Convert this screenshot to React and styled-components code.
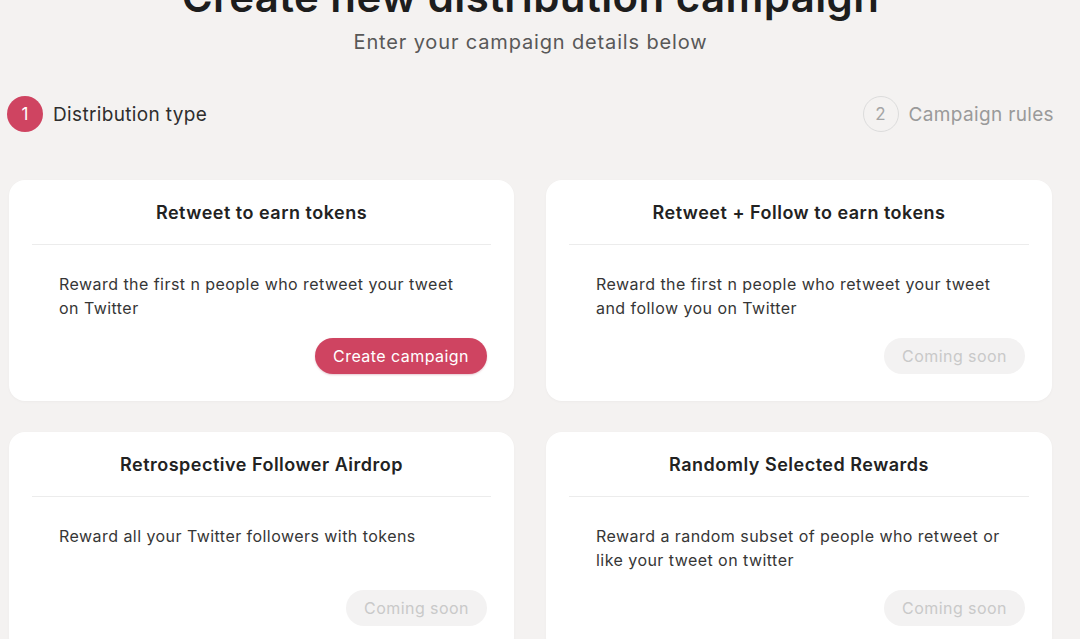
import React from "react";
import styled, { createGlobalStyle } from "styled-components";

const Global = createGlobalStyle`
  html, body { margin: 0; padding: 0; background: #f4f2f1; }
  body { font-family: Inter, "Noto Sans", sans-serif; color: #2a2a2a; overflow: hidden; }
  * { box-sizing: border-box; }
`;

const Page = styled.div`
  width: 1080px;
  height: 639px;
  overflow: hidden;
  background: #f4f2f1;
`;

const Container = styled.div`
  width: 1047px;
  margin-left: 7px;
  display: flex;
  flex-direction: column;
`;

const Title = styled.h1`
  margin: -27px 0 0;
  font-size: 42px;
  line-height: 48px;
  font-weight: 600;
  text-align: center;
  color: #1d1d1d;
  letter-spacing: 0.4px;
`;

const Subtitle = styled.p`
  margin: 9px 0 0;
  font-size: 20px;
  line-height: 24px;
  text-align: center;
  color: #585858;
  letter-spacing: 0.85px;
`;

const Steps = styled.div`
  display: flex;
  justify-content: space-between;
  align-items: center;
  margin-top: 42px;
`;

const Step = styled.div`
  display: flex;
  align-items: center;
  gap: 10px;
  font-size: 19px;
  letter-spacing: 0.35px;
  color: ${(p) => (p.$active ? "#2e2e2e" : "#9a9a9a")};
`;

const StepNum = styled.span`
  width: 36px;
  height: 36px;
  border-radius: 50%;
  display: flex;
  align-items: center;
  justify-content: center;
  font-size: 17px;
  letter-spacing: 0;
  background: ${(p) => (p.$active ? "#cf4461" : "transparent")};
  color: ${(p) => (p.$active ? "#fff" : "#a5a5a5")};
  border: ${(p) => (p.$active ? "none" : "1.5px solid #dcdcdc")};
`;

const Grid = styled.div`
  display: grid;
  grid-template-columns: 505px 506px;
  column-gap: 32px;
  row-gap: 31px;
  padding-left: 2px;
  margin-top: 48px;
`;

const Card = styled.div`
  background: #fff;
  border-radius: 16px;
  padding: 0 23px;
  height: 221px;
  box-shadow: 0 1px 3px rgba(0, 0, 0, 0.03);
  display: flex;
  flex-direction: column;
`;

const CardHeader = styled.div`
  height: 65px;
  display: flex;
  align-items: center;
  justify-content: center;
  border-bottom: 1px solid #ececec;
  font-size: 18px;
  letter-spacing: 0.5px;
  font-weight: 600;
  color: #222;
`;

const CardBody = styled.div`
  padding: 27px 4px 0 27px;
  display: flex;
  flex-direction: column;
`;

const Desc = styled.p`
  margin: 0;
  min-height: 48px;
  font-size: 16px;
  line-height: 24px;
  letter-spacing: 0.45px;
  color: #363636;
  padding-right: 20px;
`;

const Actions = styled.div`
  display: flex;
  justify-content: flex-end;
  margin-top: 18px;
`;

const Button = styled.button`
  height: 36px;
  border-radius: 18px;
  border: none;
  font-family: inherit;
  font-size: 16px;
  letter-spacing: 0.45px;
  padding: 0 18px;
  background: ${(p) => (p.$primary ? "#cf4461" : "#f3f2f2")};
  color: ${(p) => (p.$primary ? "#fff" : "#c9c9c9")};
  box-shadow: ${(p) => (p.$primary ? "0 1px 2px rgba(160,40,70,0.25)" : "none")};
`;

const cards = [
  {
    title: "Retweet to earn tokens",
    desc: "Reward the first n people who retweet your tweet on Twitter",
    primary: true,
  },
  {
    title: "Retweet + Follow to earn tokens",
    desc: "Reward the first n people who retweet your tweet and follow you on Twitter",
  },
  {
    title: "Retrospective Follower Airdrop",
    desc: "Reward all your Twitter followers with tokens",
  },
  {
    title: "Randomly Selected Rewards",
    desc: "Reward a random subset of people who retweet or like your tweet on twitter",
  },
];

export default function App() {
  return (
    <Page>
      <Global />
      <Container>
        <Title>Create new distribution campaign</Title>
        <Subtitle>Enter your campaign details below</Subtitle>
        <Steps>
          <Step $active>
            <StepNum $active>1</StepNum>
            Distribution type
          </Step>
          <Step>
            <StepNum>2</StepNum>
            Campaign rules
          </Step>
        </Steps>
        <Grid>
          {cards.map((c) => (
            <Card key={c.title}>
              <CardHeader>{c.title}</CardHeader>
              <CardBody>
                <Desc>{c.desc}</Desc>
                <Actions>
                  <Button $primary={c.primary}>
                    {c.primary ? "Create campaign" : "Coming soon"}
                  </Button>
                </Actions>
              </CardBody>
            </Card>
          ))}
        </Grid>
      </Container>
    </Page>
  );
}
